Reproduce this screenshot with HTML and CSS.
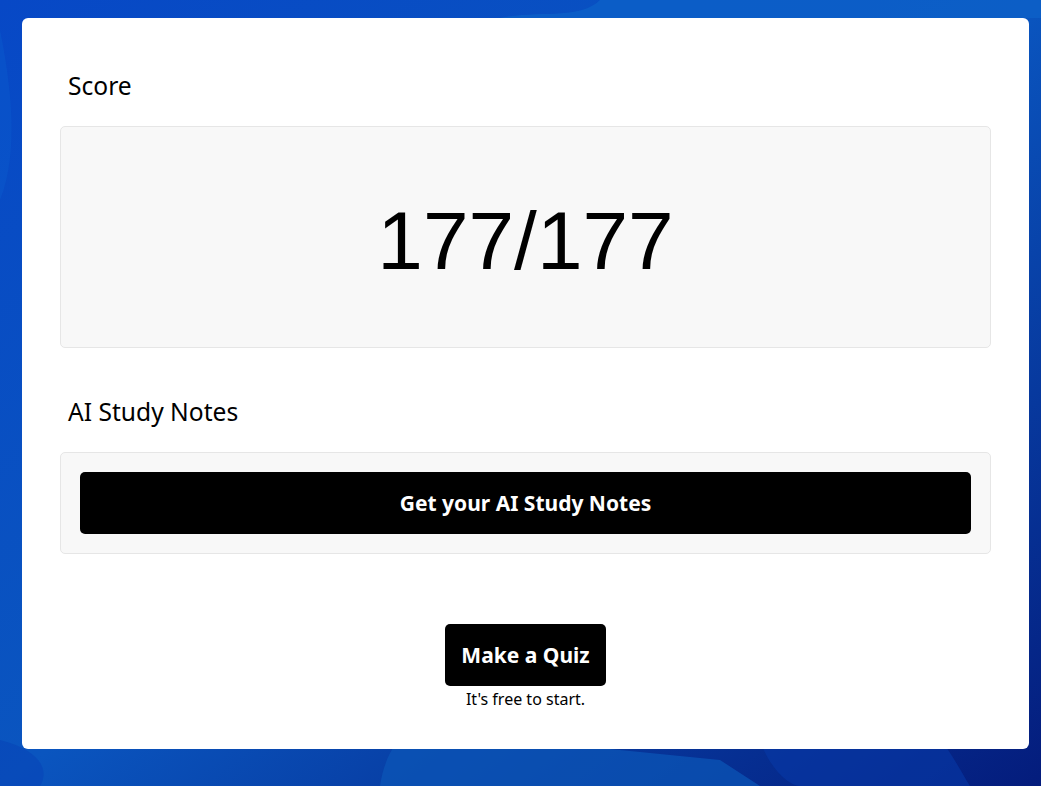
FILE: index.html
```html
<!DOCTYPE html>
<html lang="en">
<head>
<meta charset="utf-8">
<title>Score</title>
<link rel="stylesheet" href="styles.css">
</head>
<body>
<div class="bg">
  <svg class="bg-art" viewBox="0 0 1041 786" preserveAspectRatio="none" aria-hidden="true">
    <defs>
      <linearGradient id="g1" x1="0" y1="0" x2="1" y2="1">
        <stop offset="0" stop-color="#0748c6"/>
        <stop offset="0.5" stop-color="#0a55bf"/>
        <stop offset="1" stop-color="#041c7c"/>
      </linearGradient>
    </defs>
    <rect width="1041" height="786" fill="url(#g1)"/>
    <path d="M600 0 C580 20 540 10 500 18 L1041 18 L1041 0 Z" fill="#0c60c8" opacity="0.8"/>
    <path d="M0 30 L0 200 C20 150 10 80 0 30 Z" fill="#0a56cc" opacity="0.6"/>
    <path d="M380 786 C390 720 440 700 520 740 L720 760 L760 786 Z" fill="#0b57b8" opacity="0.7"/>
    <path d="M760 740 C770 770 790 786 800 786 L970 786 C960 770 950 750 940 740 Z" fill="#0638a6" opacity="0.6"/>
    <path d="M0 740 L0 786 L40 786 C50 770 40 750 0 740 Z" fill="#0744b8" opacity="0.6"/>
  </svg>
  <main class="card">
    <section class="section">
      <h2 class="heading">Score</h2>
      <div class="panel score-panel">
        <div class="score">177/177</div>
      </div>
    </section>
    <section class="section notes">
      <h2 class="heading">AI Study Notes</h2>
      <div class="panel notes-panel">
        <button class="btn btn-wide">Get your AI Study Notes</button>
      </div>
    </section>
    <div class="cta">
      <button class="btn btn-quiz">Make a Quiz</button>
      <p class="cta-note">It's free to start.</p>
    </div>
  </main>
</div>
</body>
</html>
```
FILE: styles.css
```css
* { box-sizing: border-box; }
html, body { margin: 0; padding: 0; }
body {
  font-family: "Noto Sans", "Open Sans", "Liberation Sans", sans-serif;
  color: #000;
  width: 1041px;
  height: 786px;
  overflow: hidden;
}
.bg {
  position: relative;
  width: 1041px;
  height: 786px;
  padding: 18px 12px 0 22px;
}
.bg-art {
  position: absolute;
  inset: 0;
  width: 100%;
  height: 100%;
}
.card {
  position: relative;
  width: 1007px;
  height: 731px;
  background: #fff;
  border-radius: 6px;
  padding: 52px 38px 0 38px;
}
.heading {
  margin: 0;
  padding-left: 8px;
  font-size: 24.6px;
  font-weight: 400;
  line-height: 32px;
}
.panel {
  margin-top: 24px;
  background: #f8f8f8;
  border: 1px solid #e6e6e6;
  border-radius: 5px;
}
.score-panel {
  height: 222px;
  display: flex;
  align-items: center;
  justify-content: center;
}
.score {
  font-family: "Liberation Sans", "Noto Sans", sans-serif;
  font-size: 82px;
  line-height: 1;
  padding-top: 8px;
}
.notes { margin-top: 48px; }
.notes-panel {
  padding: 19px 19px 19px 19px;
}
.btn {
  display: flex;
  align-items: center;
  justify-content: center;
  background: #000;
  color: #fff;
  border: 0;
  border-radius: 5px;
  font-family: "Noto Sans", "Open Sans", sans-serif;
  font-weight: 700;
  font-size: 21px;
  height: 62px;
  cursor: pointer;
}
.btn-wide { width: 100%; }
.cta {
  margin-top: 70px;
  display: flex;
  flex-direction: column;
  align-items: center;
}
.btn-quiz {
  width: 161px;
  padding: 0;
}
.cta-note {
  margin: 1px 0 0 0;
  font-size: 16px;
  line-height: 24px;
}
```
